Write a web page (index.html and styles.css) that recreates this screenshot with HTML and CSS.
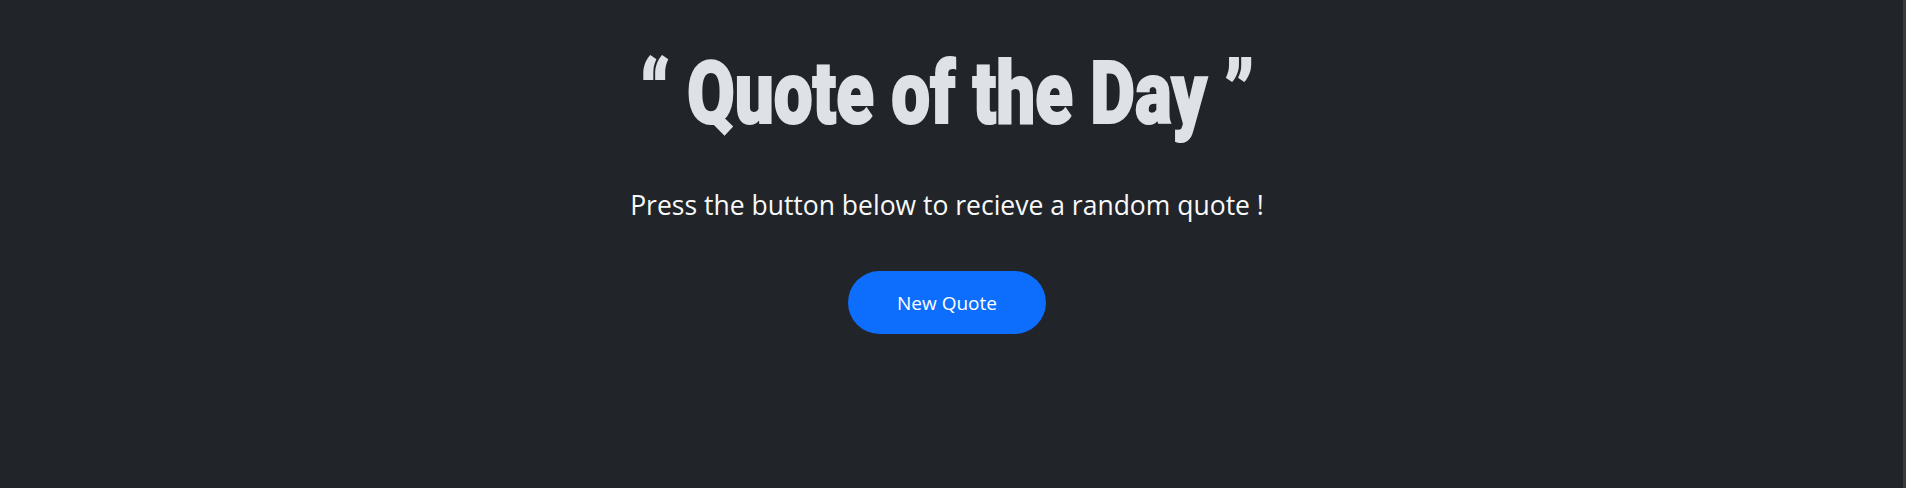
FILE: index.html
```html
<!DOCTYPE html>
<html lang="en">
<head>
<meta charset="utf-8">
<title>Quote of the Day</title>
<link rel="stylesheet" href="styles.css">
</head>
<body>
<main class="page">
  <h1 class="title"><span class="title-text">“ Quote of the Day ”</span></h1>
  <p class="lead">Press the button below to recieve a random quote !</p>
  <button class="btn">New Quote</button>
</main>
</body>
</html>
```
FILE: styles.css
```css
html, body {
  margin: 0;
  height: 100%;
}
body {
  background: #212529;
  border-right: 3px solid #3a3a3a;
  box-sizing: border-box;
  font-family: "Open Sans", "Noto Sans", sans-serif;
}
.page {
  display: flex;
  flex-direction: column;
  align-items: center;
  padding: 41px 9px 0 0;
}
.title {
  margin: 0;
  font-family: Roboto, "Noto Sans", sans-serif;
  font-weight: 900;
  font-size: 87px;
  line-height: 1.2;
  color: #dee2e6;
  white-space: nowrap;
}
.title-text {
  display: inline-block;
  transform: scaleX(0.795);
  -webkit-text-stroke: 2px #dee2e6;
}
.lead {
  margin: 41px 0 0;
  font-size: 26.5px;
  line-height: 1.5;
  color: #f8f9fa;
}
.btn {
  margin-top: 45px;
  width: 198px;
  height: 63px;
  border: none;
  border-radius: 32px;
  background: #0d6efd;
  color: #fff;
  font-family: "Open Sans", sans-serif;
  font-size: 19px;
  padding: 0;
}
```
